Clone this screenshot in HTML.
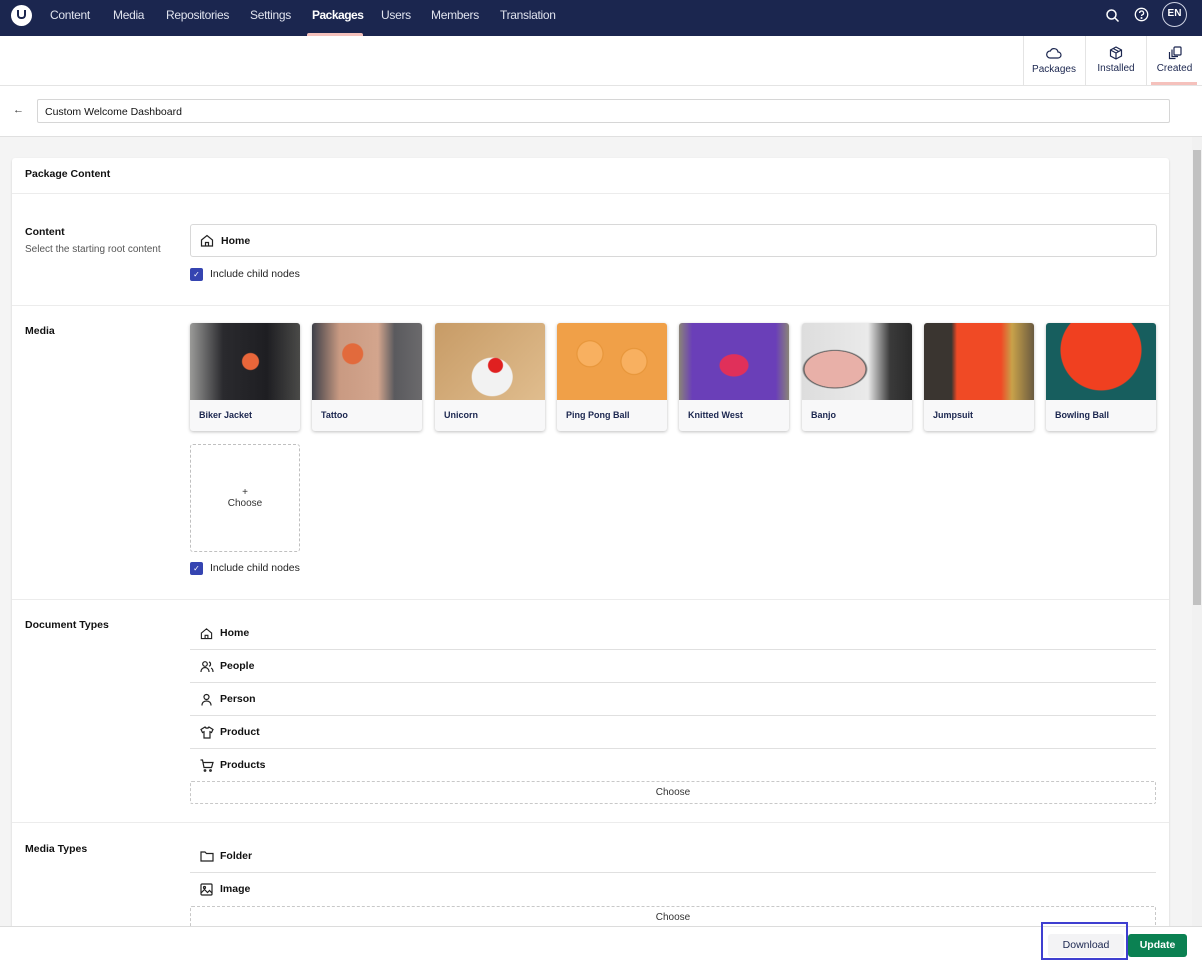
<!DOCTYPE html>
<html><head><style>
*{box-sizing:border-box;margin:0;padding:0}
body{width:1202px;height:961px;overflow:hidden;font-family:"Liberation Sans",sans-serif;background:#f4f4f4;position:relative;color:#1b264f}
.abs{position:absolute}
.top{left:0;top:0;width:1202px;height:36px;background:#1b264f}
.nav{color:#e0e3ee;font-size:12px;letter-spacing:-0.3px;top:8px}
.sub{left:0;top:36px;width:1202px;height:50px;background:#fff;border-bottom:1px solid #e4e4e4}
.tab{top:36px;height:50px;width:61px;border-left:1px solid #e4e4e4;text-align:center;font-size:10px;color:#1b264f}
.tab svg{display:block;margin:10px auto 3px}
.bar{left:0;top:86px;width:1202px;height:51px;background:#fff;border-bottom:1px solid #e0e0e0}
.card{left:12px;top:158px;width:1157px;height:800px;background:#fff;box-shadow:0 1px 2px rgba(0,0,0,.15);border-radius:3px}
.lbl{font-size:10.5px;font-weight:bold;color:#111}
.div{left:12px;width:1157px;height:1px;background:#ececec}
.tile{top:323px;width:110px;height:108px;border-radius:3px;box-shadow:0 1px 3px rgba(0,0,0,.25);background:#f8f8f9;overflow:hidden}
.tile .img{height:77px}
.tile span{position:absolute;left:9px;top:87px;font-size:9px;font-weight:bold;color:#1b264f}
.row{left:190px;width:966px;height:33px;border-bottom:1px solid #e0e0e0;font-size:10.5px;font-weight:bold;color:#111}
.row svg{position:absolute;left:10px;top:10px}
.row b{position:absolute;left:30px;top:10px}
.choose{left:190px;width:966px;height:23px;border:1px dashed #c8c8c8;text-align:center;font-size:10px;color:#333;line-height:21px;border-radius:2px}
.cb{width:13px;height:13px;background:#3544b1;border-radius:2px;color:#fff;font-size:8px;text-align:center;line-height:13px}
.cbt{font-size:10.5px;color:#222}
</style></head><body>
<div class="abs top"></div>
<div class="abs" style="left:11px;top:5px;width:21px;height:21px;border-radius:50%;background:#fff"><div style="position:absolute;left:6px;top:5px;width:9px;height:9px;border:2px solid #1b264f;border-top:none;border-radius:0 0 4px 4px"></div></div>
<div class="abs nav" style="left:50px">Content</div>
<div class="abs nav" style="left:113px">Media</div>
<div class="abs nav" style="left:166px">Repositories</div>
<div class="abs nav" style="left:250px">Settings</div>
<div class="abs nav" style="left:312px;color:#fff;font-weight:bold;letter-spacing:-0.5px">Packages</div>
<div class="abs" style="left:307px;top:33px;width:56px;height:3px;background:#f5c1bc;border-radius:2px 2px 0 0"></div>
<div class="abs nav" style="left:381px">Users</div>
<div class="abs nav" style="left:431px">Members</div>
<div class="abs nav" style="left:500px">Translation</div>
<svg class="abs" style="left:1105px;top:8px" width="15" height="15" viewBox="0 0 15 15" fill="none" stroke="#fff" stroke-width="1.5"><circle cx="6.5" cy="6.5" r="4.5"/><path d="M10 10l3.5 3.5"/></svg>
<svg class="abs" style="left:1134px;top:7px" width="15" height="15" viewBox="0 0 15 15" fill="none" stroke="#fff" stroke-width="1.3"><circle cx="7.5" cy="7.5" r="6.2"/><path d="M5.6 6a2 2 0 1 1 2.6 1.9c-.5.2-.7.6-.7 1.1"/><circle cx="7.5" cy="11" r=".4" fill="#fff"/></svg>
<div class="abs" style="left:1162px;top:2px;width:25px;height:25px;border:1.5px solid #cfd3e3;border-radius:50%;color:#fff;font-size:10px;font-weight:bold;text-align:center;line-height:22px">EN</div>
<div class="abs sub"></div>
<div class="abs tab" style="left:1023px"><svg width="16" height="12" viewBox="0 0 16 12" fill="none" stroke="#1b264f" stroke-width="1.2" style="margin-top:11px;margin-bottom:5px"><path d="M4 11h8a3 3 0 0 0 0-6 4 4 0 0 0-7.6-1A3.5 3.5 0 0 0 4 11z"/></svg>Packages</div>
<div class="abs tab" style="left:1085px"><svg width="14" height="14" viewBox="0 0 14 14" fill="none" stroke="#1b264f" stroke-width="1.2"><path d="M7 1l5.5 3v6L7 13 1.5 10V4z M1.5 4L7 7l5.5-3 M7 7v6 M4.2 2.5l5.5 3"/></svg>Installed</div>
<div class="abs tab" style="left:1146px;width:56px"><svg width="14" height="14" viewBox="0 0 14 14" fill="none" stroke="#1b264f" stroke-width="1.2"><rect x="6" y="1" width="7" height="8" rx="1"/><path d="M4 3.5v7h6 M1.5 6v6.5h6"/></svg>Created</div>
<div class="abs" style="left:1151px;top:82px;width:46px;height:3px;background:#f5c1bc"></div>
<div class="abs bar"></div>
<div class="abs" style="left:13px;top:104px;font-size:11px;color:#333">←</div>
<div class="abs" style="left:37px;top:99px;width:1133px;height:24px;border:1px solid #d6d6d6;border-radius:2px;font-size:10.5px;color:#111;padding:6px 7px">Custom Welcome Dashboard</div>
<div class="abs" style="left:1192px;top:137px;width:10px;height:789px;background:#f1f1f1"></div>
<div class="abs" style="left:1193px;top:150px;width:8px;height:455px;background:#c1c1c1"></div>
<div class="abs card"></div>
<div class="abs lbl" style="left:25px;top:168px">Package Content</div>
<div class="abs div" style="top:193px"></div>
<div class="abs lbl" style="left:25px;top:226px">Content</div>
<div class="abs" style="left:25px;top:244px;font-size:10px;color:#555">Select the starting root content</div>
<div class="abs" style="left:190px;top:224px;width:967px;height:33px;border:1px solid #d8d8d8;border-radius:3px"></div>
<svg class="abs" style="left:200px;top:234px" width="14" height="13" viewBox="0 0 14 13" fill="none" stroke="#222" stroke-width="1.2"><path d="M1.5 6L7 1.5 12.5 6v6h-11z M5.5 12V8.5h3V12"/></svg>
<div class="abs lbl" style="left:221px;top:235px">Home</div>
<div class="abs cb" style="left:190px;top:268px">✓</div><div class="abs cbt" style="left:210px;top:268px">Include child nodes</div>
<div class="abs div" style="top:305px"></div>
<div class="abs lbl" style="left:25px;top:325px">Media</div>
<div class="abs tile" style="left:190px"><div class="img" style="background:radial-gradient(circle at 55% 50%,#e8663a 0 8px,transparent 9px),linear-gradient(90deg,#9a9a98 0,#2a2a2e 30%,#1e1e22 70%,#4a4a48)"></div><span>Biker Jacket</span></div>
<div class="abs tile" style="left:312px"><div class="img" style="background:radial-gradient(circle at 37% 40%,#e26a3c 0 10px,transparent 11px),linear-gradient(90deg,#3d3f48 0,#c99a82 25%,#d3a58d 60%,#5a5a5e 75%,#6b6a6c)"></div><span>Tattoo</span></div>
<div class="abs tile" style="left:435px"><div class="img" style="background:radial-gradient(circle at 55% 55%,#e02020 0 7px,transparent 8px),radial-gradient(ellipse at 52% 70%,#f2f2f2 0 20px,transparent 21px),linear-gradient(135deg,#c79b66,#e0bd8e)"></div><span>Unicorn</span></div>
<div class="abs tile" style="left:557px"><div class="img" style="background:radial-gradient(circle at 30% 40%,#f8b060 0 12px,#e59336 13px,transparent 14px),radial-gradient(circle at 70% 50%,#f8b060 0 12px,#e59336 13px,transparent 14px),#f0a048"></div><span>Ping Pong Ball</span></div>
<div class="abs tile" style="left:679px"><div class="img" style="background:radial-gradient(ellipse at 50% 55%,#e0305a 0 14px,transparent 15px),linear-gradient(90deg,#8a8478 0,#6a3fb8 12%,#6a3fb8 88%,#8a8478)"></div><span>Knitted West</span></div>
<div class="abs tile" style="left:802px"><div class="img" style="background:radial-gradient(ellipse at 30% 60%,#e8b0a8 0 30px,#555 31px,transparent 33px),linear-gradient(90deg,#ddd,#eaeaea 60%,#3a3a3a 80%,#2a2a2a)"></div><span>Banjo</span></div>
<div class="abs tile" style="left:924px"><div class="img" style="background:linear-gradient(90deg,#3a3530 0,#3a3530 25%,#f04a25 30%,#f04a25 70%,#c8a24a 80%,#6a5a40)"></div><span>Jumpsuit</span></div>
<div class="abs tile" style="left:1046px"><div class="img" style="background:radial-gradient(circle at 50% 35%,#f04020 0 40px,transparent 41px),#175e5e"></div><span>Bowling Ball</span></div>
<div class="abs" style="left:190px;top:444px;width:110px;height:108px;border:1px dashed #c0c0c0;border-radius:3px;text-align:center;font-size:10px;color:#333;padding-top:42px">+<br>Choose</div>
<div class="abs cb" style="left:190px;top:562px">✓</div><div class="abs cbt" style="left:210px;top:562px">Include child nodes</div>
<div class="abs div" style="top:599px"></div>
<div class="abs lbl" style="left:25px;top:619px">Document Types</div>
<div class="abs row" style="top:617px"><svg width="13" height="13" viewBox="0 0 14 13" fill="none" stroke="#222" stroke-width="1.2"><path d="M1.5 6L7 1.5 12.5 6v6h-11z M5.5 12V8.5h3V12"/></svg><b>Home</b></div>
<div class="abs row" style="top:650px"><svg width="14" height="13" viewBox="0 0 14 13" fill="none" stroke="#222" stroke-width="1.2"><circle cx="5" cy="4" r="2.3"/><path d="M1 12c0-3 2-4.5 4-4.5S9 9 9 12 M9 2a2.2 2.2 0 0 1 0 4.2 M11 8c1.3.6 2 2 2 4"/></svg><b>People</b></div>
<div class="abs row" style="top:683px"><svg width="13" height="13" viewBox="0 0 13 13" fill="none" stroke="#222" stroke-width="1.2"><circle cx="6.5" cy="4" r="2.5"/><path d="M2 12.5c0-3 2-4.5 4.5-4.5S11 9.5 11 12.5"/></svg><b>Person</b></div>
<div class="abs row" style="top:716px"><svg width="14" height="13" viewBox="0 0 14 13" fill="none" stroke="#222" stroke-width="1.2"><path d="M5 1L1 3.5l1.5 3 1.5-.8V12h6V5.7l1.5.8 1.5-3L9 1C8.5 2.5 5.5 2.5 5 1z"/></svg><b>Product</b></div>
<div class="abs row" style="top:749px;border:none"><svg width="14" height="13" viewBox="0 0 14 13" fill="none" stroke="#222" stroke-width="1.2"><path d="M0.5 1h2l1.5 7.5h7.5L13 3.5H3"/><circle cx="5" cy="11.5" r=".8"/><circle cx="10.5" cy="11.5" r=".8"/></svg><b>Products</b></div>
<div class="abs choose" style="top:781px">Choose</div>
<div class="abs div" style="top:822px"></div>
<div class="abs lbl" style="left:25px;top:843px">Media Types</div>
<div class="abs row" style="top:840px"><svg width="14" height="12" viewBox="0 0 14 12" fill="none" stroke="#222" stroke-width="1.2"><path d="M1 2h4l1.5 1.5H13V11H1z"/></svg><b>Folder</b></div>
<div class="abs row" style="top:873px;border:none"><svg width="13" height="13" viewBox="0 0 13 13" fill="none" stroke="#222" stroke-width="1.2"><rect x="1" y="1" width="11" height="11" rx="1"/><circle cx="4.5" cy="4.5" r="1"/><path d="M1 10l3.5-3.5 3 3 2-2L12 10"/></svg><b>Image</b></div>
<div class="abs choose" style="top:906px">Choose</div>
<div class="abs" style="left:0;top:926px;width:1202px;height:35px;background:#fff;border-top:1px solid #dcdcdc"></div>
<div class="abs" style="left:1048px;top:934px;width:76px;height:23px;background:#f3f3f5;border-radius:3px;font-size:10.5px;text-align:center;line-height:23px;color:#1b264f">Download</div>
<div class="abs" style="left:1041px;top:922px;width:87px;height:38px;border:2px solid #3f3fd0"></div>
<div class="abs" style="left:1128px;top:934px;width:59px;height:23px;background:#0b8152;border-radius:3px;font-size:10.5px;font-weight:bold;text-align:center;line-height:23px;color:#fff">Update</div>
</body></html>
